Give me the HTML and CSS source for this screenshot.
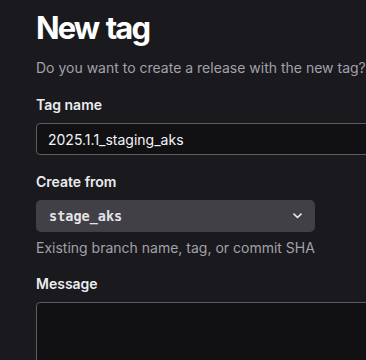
FILE: index.html
```html
<!DOCTYPE html>
<html>
<head>
<meta charset="utf-8">
<link rel="stylesheet" href="styles.css">
</head>
<body>
<main class="page">
  <h1 class="title">New tag</h1>
  <p class="subtitle">Do you want to create a release with the new tag?</p>

  <div class="field field-name">
    <label class="label">Tag name</label>
    <div class="input">2025.1.1_staging_aks</div>
  </div>

  <div class="field">
    <label class="label">Create from</label>
    <div class="select">
      <span class="select-value">stage_aks</span>
      <svg class="chevron" width="9" height="6" viewBox="0 0 9 6"><path d="M1 1.2l3.5 3.3 3.5-3.3" fill="none" stroke="#e4e4e7" stroke-width="1.7" stroke-linecap="round" stroke-linejoin="round"/></svg>
    </div>
    <p class="help">Existing branch name, tag, or commit SHA</p>
  </div>

  <div class="field">
    <label class="label">Message</label>
    <div class="textarea"></div>
  </div>
</main>
</body>
</html>
```

FILE: styles.css
```css
html, body {
  margin: 0;
  padding: 0;
  background: #1a191e;
  overflow: hidden;
  height: 360px;
}
.page {
  font-family: Inter, "Noto Sans", sans-serif;
  padding: 8px 0 0 36px;
  display: flex;
  flex-direction: column;
}
.title {
  margin: 0;
  font-size: 31px;
  line-height: 40px;
  font-weight: 700;
  color: #ffffff;
  letter-spacing: -1.9px;
  word-spacing: 2px;
}
.subtitle {
  margin: 10px 0 17px;
  font-size: 14px;
  line-height: 20px;
  color: #a1a1aa;
  white-space: nowrap;
}
.field {
  display: flex;
  flex-direction: column;
  margin-bottom: 16px;
}
.field-name {
  margin-bottom: 17px;
}
.label {
  font-size: 14px;
  line-height: 20px;
  font-weight: 600;
  color: #ececf0;
  margin-bottom: 8px;
}
.input {
  box-sizing: border-box;
  width: 440px;
  height: 32px;
  border: 1px solid #5c5c63;
  border-radius: 4px;
  background: #111113;
  color: #f4f4f5;
  font-size: 14px;
  line-height: 20px;
  padding: 6px 11px;
}
.select {
  box-sizing: border-box;
  width: 279px;
  height: 32px;
  border-radius: 5px;
  background: #414047;
  display: flex;
  align-items: center;
  justify-content: space-between;
  padding: 0 13px 0 13px;
}
.select-value {
  font-family: "DejaVu Sans Mono", "Liberation Mono", monospace;
  font-size: 13.5px;
  font-weight: 700;
  color: #e4e4e7;
}
.chevron {
  display: block;
}
.help {
  margin: 6px 0 0;
  font-size: 14px;
  line-height: 20px;
  color: #a1a1aa;
  white-space: nowrap;
}
.textarea {
  box-sizing: border-box;
  width: 440px;
  height: 100px;
  border: 1px solid #5c5c63;
  border-radius: 4px;
  background: #111113;
}
```
